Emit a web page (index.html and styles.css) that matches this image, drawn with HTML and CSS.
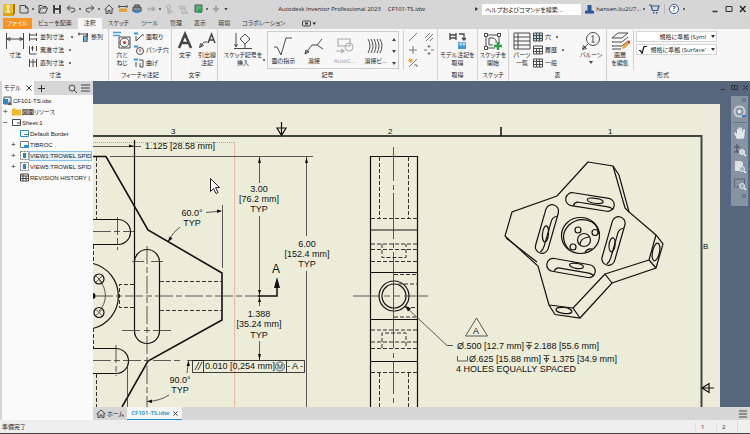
FILE: index.html
```html
<!DOCTYPE html>
<html lang="ja">
<head>
  <meta charset="UTF-8">
  <title>Autodesk Inventor Professional 2023</title>
  <link rel="stylesheet" href="styles.css">
</head>
<body>
<div class="app">

  <!-- Title bar -->
  <header class="titlebar">
    <div class="quick">
      <button class="logo" aria-label="Inventor"><svg width="12" height="13" viewBox="0 0 12 13"><path d="M0 1h12v9l-2 3H0z" fill="#dba512"/><path d="M0 1h10v9H0z" fill="#f0bf25"/><path d="M10 1l2 0v9l-2 3z" fill="#a87400"/><path d="M3.500 3h3M5 3v6M3.500 9h3" stroke="#fff" stroke-width="1.300"/></svg></button>
      <button aria-label="新規"><svg width="10" height="10" viewBox="0 0 10 10"><path d="M1 1.500h5.500l2.500 2.500v5H1zM6.500 1.500V4H9" class="ln"/></svg></button><i class="dot"></i>
      <button aria-label="開く"><svg width="10" height="10" viewBox="0 0 10 10"><path d="M1 9V1.500h3l1 1h3V4M1 9l2-5h6.500l-2 5z" class="ln"/></svg></button>
      <button aria-label="保存"><svg width="10" height="10" viewBox="0 0 10 10"><path d="M1 1h8v8.500H1z" fill="#444"/><path d="M3 1h4v3H3zM3 6h4v3.500H3z" fill="#ddd"/></svg></button>
      <button aria-label="元に戻す"><svg width="10" height="10" viewBox="0 0 10 10"><path d="M4 1.500L1 4l3 2.500M1 4h5q3 0 3 2t-3 2H5" class="ln"/></svg></button><i class="dot"></i>
      <button aria-label="やり直し"><svg width="10" height="10" viewBox="0 0 10 10"><path d="M6 1.500L9 4 6 6.500M9 4H4Q1 4 1 6t3 2h1" class="ln"/></svg></button><i class="dot"></i>
      <button aria-label="ホーム"><svg width="10" height="10" viewBox="0 0 10 10"><path d="M.5 5.500L5 1l4.500 4.500M2 4.500v5h2V6.500h2v3h2v-5" class="ln"/></svg></button>
      <button aria-label="計測"><svg width="10" height="10" viewBox="0 0 10 10"><path d="M1 1v3M9 1v3M1 2.500h8" class="ln"/><path d="M1 4.500h8V8H1z" fill="#e5a23a"/></svg></button>
      <button aria-label="印刷"><svg width="10" height="10" viewBox="0 0 11 10"><path d="M3 3V.5h5V3M1 3h9v4.500H1z" fill="#8a9097" stroke="#444"/><path d="M3 6h5v3.500H3z" fill="#2d8bd0"/></svg></button>
      <button aria-label="更新"><svg width="10" height="10" viewBox="0 0 10 10"><path d="M1 5h4M3 3v4" stroke="#aaa"/><circle cx="7" cy="5" r="2" fill="#aaa"/></svg></button><i class="dot"></i>
      <button aria-label="選択"><svg width="10" height="10" viewBox="0 0 10 10"><path d="M1 3l3-2 2 2-3 2zM5 5l3 4M4 6l1 3M3 5v4h3" stroke="#aaa" fill="none"/></svg></button>
      <button aria-label="設定"><svg width="10" height="10" viewBox="0 0 10 10"><path d="M1 2h3v3H1zM5 4l3 5M3 6v3h6M6 2v3" stroke="#aaa" fill="none"/></svg></button>
      <button aria-label="シート"><svg width="10" height="10" viewBox="0 0 10 10"><path d="M2 1h7v7H2z" fill="#58b37a" stroke="#555"/><path d="M5 5h4v4H5z" fill="#28a559"/></svg></button><i class="dot"></i>
      <button aria-label="追加"><svg width="8" height="8" viewBox="0 0 10 10"><path d="M1 5h8M5 1v8" stroke="#999" stroke-width="2"/></svg></button>
      <button class="caret" aria-label="カスタマイズ"></button>
    </div>
    <div class="title"><span>Autodesk Inventor Professional 2023</span><span>CF101-TS.idw</span></div>
    <div class="account">
      <i class="play"></i>
      <input class="search" type="text" aria-label="ヘルプ検索" value="ヘルプおよびコマンドを検索...">
      <button class="user"><svg width="9" height="10" viewBox="0 0 9 10"><path d="M2.500 1h4v5h-4zM0 9.500V7q4.500-2 9 0v2.500z" fill="#25599b"/></svg><span>hansen.liu2U7...</span><i class="dot"></i></button>
      <button aria-label="カート"><svg width="11" height="10" viewBox="0 0 11 10"><path d="M0 1h2l1.500 5.500h5L10 2H3" fill="none" stroke="#31588a" stroke-width="1.200"/><path d="M4 8h1.500v1.500H4zM7 8h1.500v1.500H7z" fill="#31588a"/></svg></button>
      <i class="bar"></i>
      <button class="help" aria-label="ヘルプ">?</button><i class="dot"></i>
    </div>
    <div class="winbtns">
      <button aria-label="最小化"><svg width="8" height="8"><path d="M1.500 6.500h5" stroke="#333" stroke-width="1.500"/></svg></button>
      <button aria-label="最大化"><svg width="8" height="8"><path d="M1 1.500h6v5H1z" fill="none" stroke="#333"/></svg></button>
      <button aria-label="閉じる"><svg width="8" height="8"><path d="M1 1l5.500 6M6.500 1L1 7" stroke="#222" stroke-width="1.300"/></svg></button>
    </div>
  </header>

  <!-- Ribbon tabs -->
  <nav class="tabs">
    <a href="#" class="file">ファイル</a>
    <a href="#">ビューを配置</a>
    <a href="#" class="current">注釈</a>
    <a href="#">スケッチ</a>
    <a href="#">ツール</a>
    <a href="#">管理</a>
    <a href="#">表示</a>
    <a href="#">環境</a>
    <a href="#">コラボレーション</a>
    <button aria-label="表示切替"><svg width="14" height="7" viewBox="0 0 14 7"><rect x=".5" y="1" width="8" height="5" rx="1" fill="none" stroke="#444"/><path d="M3 2.500h3v2H3z" fill="#444"/><path d="M10.500 2.500h3.500L12.250 5z" fill="#222"/></svg></button>
  </nav>

  <!-- Ribbon -->
  <div class="ribbon">
    <section class="panel w-dim">
      <div class="body">
        <button class="big"><svg width="20" height="20" viewBox="0 0 20 20"><path d="M1.500 2v16M18.500 2v16M2 8h16M2 8l3-1.500v3zM18 8l-3-1.500v3z" class="ln"/></svg>寸法</button>
        <div class="rows">
          <button><svg width="10" height="10" viewBox="0 0 10 10"><path d="M1.500 1v8M1.500 3h7M1.500 7h7M8.500 1v3M8.500 6v3" class="ln"/></svg>並列寸法<i class="dot far"></i></button>
          <button><svg width="10" height="10" viewBox="0 0 10 10"><path d="M1.500 1v8h7M4.500 1v5M8.500 1v5M3 3h3" class="ln"/></svg>累進寸法<i class="dot"></i></button>
          <button><svg width="10" height="10" viewBox="0 0 10 10"><path d="M1.500 1v8M5 1v8M8.500 1v8M1 4h8" class="ln"/></svg>直列寸法<i class="dot"></i></button>
        </div>
        <div class="rows">
          <button><svg width="11" height="10" viewBox="0 0 11 10"><path d="M0 2h5M1 .5v3M5 2h4v6M9.500 1v4" class="ln"/><path d="M5.500 4h3.500v6H5.500z" fill="#6fb8e6" stroke="#555"/></svg>整列</button>
        </div>
      </div>
      <h2>寸法</h2>
    </section>

    <section class="panel w-feat">
      <div class="body">
        <button class="big"><svg width="20" height="20" viewBox="0 0 20 20"><path d="M1 1.500h8M1 4.500h7" stroke="#46a2db" stroke-width="1.500"/><path d="M7 6h11v11H7z" class="ln"/><circle cx="12.500" cy="11.500" r="4.500" class="ln"/><circle cx="12.500" cy="11.500" r="1.500" fill="#d22"/></svg>穴と<br>ねじ</button>
        <div class="rows">
          <button><svg width="10" height="10" viewBox="0 0 10 10"><path d="M0 1.500h4" stroke="#3297d4" stroke-width="2"/><path d="M2 9l6-6h2M2 4v5" class="ln"/></svg>面取り</button>
          <button><svg width="10" height="10" viewBox="0 0 10 10"><path d="M0 1.500h4" stroke="#3297d4" stroke-width="2"/><circle cx="6" cy="6" r="3.500" class="ln"/><path d="M6 4v3" stroke="#d22"/></svg>パンチ穴</button>
          <button><svg width="10" height="10" viewBox="0 0 10 10"><path d="M0 1.500h4" stroke="#3297d4" stroke-width="2"/><path d="M2 4v5M5 2h4v7H6V5" class="ln"/></svg>曲げ</button>
        </div>
      </div>
      <h2>フィーチャ注記</h2>
    </section>

    <section class="panel w-text">
      <div class="body">
        <button class="big"><svg width="18" height="20" viewBox="0 0 18 20"><path d="M3 17L9 3l6 14M5.500 12h7" fill="none" stroke="#444" stroke-width="2.500"/></svg>文字</button>
        <button class="big"><svg width="18" height="20" viewBox="0 0 18 20"><path d="M10 12l3.500-9 3.500 9M11 9h5" fill="none" stroke="#444" stroke-width="1.500"/><path d="M9 11H6l-4 5M1.500 16.500l1-4 3 2z" class="ln"/></svg>引出線<br>注記</button>
      </div>
      <h2>文字</h2>
    </section>

    <section class="panel w-sym">
      <div class="body">
        <button class="big wide"><svg width="20" height="20" viewBox="0 0 20 20"><path d="M3 2v14M1.500 13L3 16l1.500-3M1 17.500h18M12 3l5 5-5 5-5-5zM12 13v4" class="ln"/></svg>スケッチ記号を<br>挿入</button>
        <i class="dot low"></i>
        <div class="gallery">
          <button><svg width="20" height="20" viewBox="0 0 20 20"><path d="M1 11l3 0 4 8L13 2h6" class="ln"/></svg>面の指示</button>
          <button><svg width="20" height="20" viewBox="0 0 20 20"><path d="M1 18l7-9h5l5-6M13 9l6 4M1 18l1-4 3 2z" class="ln"/></svg>溶接</button>
          <button class="off"><svg width="20" height="20" viewBox="0 0 20 20"><path d="M3 3h12v7H3zM1 15h7M6 13l3 2-3 2" fill="none" stroke="#aaa" stroke-width="1.200"/><circle cx="14" cy="11" r="4" fill="none" stroke="#aaa"/></svg>AutoC...</button>
          <button><svg width="20" height="20" viewBox="0 0 20 20"><path d="M2 3q4 7 0 14M5 3q4 7 0 14M8 3q4 7 0 14M11 3q4 7 0 14M14 3q4 7 0 14" class="ln"/></svg>溶接ビ...</button>
          <div class="scroll"><i class="up"></i><i class="down"></i><i class="down"></i></div>
        </div>
        <i class="sep"></i>
        <div class="grid">
          <button aria-label="中心線"><svg width="10" height="10" viewBox="0 0 10 10"><path d="M1 9l8-8" stroke="#777"/></svg></button>
          <button aria-label="二等分線"><svg width="10" height="10" viewBox="0 0 10 10"><path d="M1 6l5-5M2 9l7-7M6 9l3-3" stroke="#777"/></svg></button>
          <button aria-label="中心マーク"><svg width="10" height="10" viewBox="0 0 10 10"><path d="M5 1v8M1 5h8" stroke="#777"/></svg></button>
          <button aria-label="中心パターン"><svg width="10" height="10" viewBox="0 0 10 10"><path d="M5 0v3M5 7v3M0 5h3M7 5h3M3.500 1.500h3M3.500 8.500h3" stroke="#777"/></svg></button>
          <button aria-label="自動中心線"><svg width="10" height="10" viewBox="0 0 10 10"><path d="M1 9l8-8M6 7h3v2" stroke="#777" fill="none"/><circle cx="2.500" cy="2.500" r="2" fill="#f2a52a"/></svg></button>
        </div>
      </div>
      <h2>記号</h2>
    </section>

    <section class="panel w-get">
      <div class="body center">
        <button class="big wide"><svg width="20" height="20" viewBox="0 0 20 20"><path d="M2 2v7M8 2v7M2 4h6M2 7h6M11 3h5v6M14 7l2 2 2-2" fill="none" stroke="#444" stroke-width="1.300"/><path d="M10 11h8v7h-8z" fill="#3d9edb"/><path d="M10 13h8M13 11v4M16 11v4" stroke="#fff" stroke-width=".7"/></svg>モデル注記を<br>取得</button>
      </div>
      <h2>取得</h2>
    </section>

    <section class="panel w-sk">
      <div class="body center">
        <button class="big wide"><svg width="20" height="20" viewBox="0 0 20 20"><path d="M3 4h13M3 4v13h9M16 4v9M6 7v7h4M6 7h4q4 1 3 5" class="ln"/><path d="M1.500 2.500h3v3h-3zM14.500 2.500h3v3h-3zM1.500 15.500h3v3h-3z" fill="#fff" stroke="#444"/><path d="M15 11v8M11 15h8" stroke="#27a243" stroke-width="2.500"/></svg>スケッチを<br>開始</button>
      </div>
      <h2>スケッチ</h2>
    </section>

    <section class="panel w-tab">
      <div class="body">
        <button class="big"><svg width="20" height="20" viewBox="0 0 20 20"><path d="M2 2h16v16H2zM2 6h16M2 10h16M2 14h16M6 2v16" class="ln"/></svg>パーツ<br>一覧</button>
        <div class="rows">
          <button><svg width="10" height="10" viewBox="0 0 10 10"><path d="M1 1h8v8H1z" fill="#b4d8ee"/><path d="M.5 1h9v8h-9zM.5 3.500h9M.5 6.500h9M3.500 1v8M6.500 1v8" class="ln"/></svg>穴<i class="dot"></i></button>
          <button><svg width="10" height="10" viewBox="0 0 10 10"><path d="M.5 1h9v8h-9zM.5 3.500h9M.5 6.500h9M3.500 3v6M6.500 3v6" class="ln"/></svg>履歴<i class="dot"></i></button>
          <button><svg width="10" height="10" viewBox="0 0 10 10"><path d="M.5 1h9v8h-9zM.5 3.500h9M.5 6.500h9M3.500 1v8M6.500 1v8" class="ln"/></svg>一般</button>
        </div>
        <i class="sep"></i>
        <button class="big wide balloon"><svg width="20" height="20" viewBox="0 0 20 20"><circle cx="12" cy="8" r="6.500" class="ln"/><path d="M7 13l-5 5M1.500 18.500l1-4 3 3zM10.500 6L12 4.500V11M10.500 11h3" class="ln"/></svg>バルーン<i class="down"></i></button>
      </div>
      <h2>表</h2>
    </section>

    <section class="panel w-fmt">
      <div class="body">
        <button class="big"><svg width="20" height="20" viewBox="0 0 20 20"><path d="M2 7l6-5h10l-6 5zM2 11l1-1M2 11h10l6-5M2 15l1-1M2 15h10l6-5M2 18h9" class="ln"/><path d="M12 18l1-3 5-5 2 2-5 5z" fill="#f1a032"/><path d="M18 10l2 2" stroke="#c33" stroke-width="2"/></svg>画層<br>を編集</button>
        <i class="sep"></i>
        <div class="styles">
          <label class="pick"><i class="tick"></i><select aria-label="スタイル"><option>規格に準拠 (Syml</option></select></label>
          <label class="pick"><i class="tick"><svg width="8" height="8" viewBox="0 0 8 8"><path d="M0 4.500h1.500L3 7.500 5 .5h3" fill="none" stroke="#111" stroke-width="1.200"/></svg></i><select aria-label="画層"><option>規格に準拠 (Surface'</option></select></label>
        </div>
      </div>
      <h2>形式</h2>
    </section>
  </div>

  <div class="main">
    <!-- Model browser -->
    <aside class="browser">
      <div class="btabs">
        <button class="on">モデル <svg width="6" height="6"><path d="M.5.5l5 5M5.500.5l-5 5" stroke="#333"/></svg></button>
        <button aria-label="追加"><svg width="7" height="7"><path d="M3.500 0v7M0 3.500h7" stroke="#333"/></svg></button>
        <button class="find" aria-label="検索"><svg width="9" height="9"><circle cx="4" cy="4" r="3" class="ln"/><path d="M6 6l3 3" class="ln"/></svg></button>
        <button aria-label="メニュー"><svg width="9" height="8"><path d="M0 1h9M0 4h9M0 7h9" stroke="#444"/></svg></button>
      </div>
      <ul class="tree">
        <li><svg width="9" height="9" viewBox="0 0 9 9"><path d="M1 1h7v7H1z" fill="#dbe9f3" stroke="#555"/><path d="M0 3h5v5H0z" fill="#2f87c5"/><path d="M6 5l3 4H5z" fill="#555"/></svg>CF101-TS.idw</li>
        <li class="l1"><b>+</b><svg width="9" height="9" viewBox="0 0 9 9"><path d="M0 1.500h3l1 1h5V8.500H0z" fill="#f0b82e"/></svg><span><mark>図面</mark>リソース</span></li>
        <li class="l1"><b>−</b><svg width="9" height="9" viewBox="0 0 9 9"><path d="M.5 1.500h8v6h-8zM5 5h3.500" class="ln"/></svg>Sheet:1</li>
        <li class="l2"><b></b><svg width="9" height="9" viewBox="0 0 9 9"><path d="M.5 1.500h8v6h-8zM4 5.500h4" fill="#fff" stroke="#2d8cc4"/></svg>Default Border</li>
        <li class="l2"><b>+</b><svg width="9" height="9" viewBox="0 0 9 9"><path d="M.5 1.500h8v6h-8z" fill="#fff" stroke="#777"/><path d="M4 5h5v3H4z" fill="#2795d9"/></svg>TIBROC</li>
        <li class="l2"><b>+</b><svg width="9" height="9" viewBox="0 0 9 9"><path d="M.5.5h8v8h-8z" fill="none" stroke="#777" stroke-dasharray="2 1"/><path d="M3 2h3v5H3z" fill="#2986ca"/></svg><span class="sel">VIEW1:TROWEL SPID</span></li>
        <li class="l2"><b>+</b><svg width="9" height="9" viewBox="0 0 9 9"><path d="M.5.5h8v8h-8z" fill="none" stroke="#777" stroke-dasharray="2 1"/><path d="M3 2h3v5H3z" fill="#2986ca"/></svg>VIEW5:TROWEL SPID</li>
        <li class="l2"><b></b><svg width="9" height="9" viewBox="0 0 9 9"><path d="M.5 1h8v7h-8zM.5 3h8M.5 5.500h8M3 1v7M6 3v5" class="ln"/></svg>REVISION HISTORY (</li>
      </ul>
    </aside>

    <div class="work">
      <div class="canvas">
        <svg class="drawing" viewBox="93 81 657 326" preserveAspectRatio="xMinYMin slice">
          <!-- sheet and border -->
          <rect x="93" y="104" width="627" height="303" class="sheet"/>
          <path d="M93 136H701.500V407" fill="none" stroke="#424840" stroke-width="2"/>
          <path d="M501 127v9" stroke="#111" stroke-width="1.500"/>
          <path d="M281.500 122v14M277 128h9l-4.500 7.500zM714 388h-12M709 383.500v9l-7-4.500z" class="k" />
          <g class="zone"><text x="171" y="134">3</text><text x="388" y="134">2</text><text x="608" y="134">1</text><text x="703" y="249">B</text></g>
          <path d="M93 142.500H234" class="red dots"/>
          <path d="M234.500 142V407" class="red"/>

          <!-- front view -->
          <path d="M93 156.500h13L148 230l74 43v47l-74 41-26 46" class="thick"/>
          <path d="M134.500 140v122M134.500 262a12.500 12.500 0 0 1 25 0v69a12.500 12.500 0 0 1-25 0v-69" class="k"/>
          <path d="M93 219.500h25a12.500 12.500 0 0 1 0 25H93M93 348.500h23a12.500 12.500 0 0 1 0 25H93" class="k"/>
          <path d="M93 263.500A33.500 33.500 0 0 1 93 328.500" class="k"/>
          <path d="M99 280A22 22 0 0 1 99 311" class="t"/>
          <circle cx="99" cy="279" r="5" class="k"/><circle cx="99" cy="312.500" r="5" class="k"/>
          <path d="M96 276l6 6M102 276l-6 6M96 309.500l6 6M102 309.500l-6 6" class="t"/>
          <circle cx="92.500" cy="296" r="3" fill="#111"/>
          <path d="M96.500 157v62M93.500 245v18M93.500 328v20M96.500 374v33M134 284.500h-14.500v23H134M160 281.500h62M160 310.500h62" class="d"/>
          <path d="M95 296h164M147 246v161M93 231.500h41M117.500 217v33M93 360.500h87M116 345v31" class="c"/>
          <path d="M132 261.500h12M151 261.500h12M122 330.500h18M144 330.500h6M153 330.500h18M127.500 364v43" class="t"/>
          <path d="M110 156.500h203M222.500 205v63M259.500 157v26M259.500 216v90M259.500 341v19M306.500 157v79M306.500 271v136M93 146.500h48" class="t"/>
          <path d="M134 146l-5-1.500v3zM259.500 157l-1.500 6h3zM306.500 157l-1.500 6h3zM259.500 295l-1.500-5h3zM259.500 297l-1.500 5h3zM259.500 360l-1.500-6h3z" class="f"/>
          <path d="M206 212.500l15-1.500M180 227q-6 4-12 14M187 373l1.500-12M169 395q-9 6-22 6.500M187 360.500h17" class="t"/>
          <path d="M222 211l-5-1.500v3.500zM168 242l1.500-5.500 3 2zM188.500 361l-2 5h3.500zM147 401.500l5-2v3.500z" class="f"/>
          <path d="M258 296h19v-9" fill="none" stroke="#111" stroke-width="1.500"/><path d="M277 277l-3 11h6z" class="f"/>
          <g class="dimtext">
            <text x="145" y="149" class="left">1.125 [28.58 mm]</text>
            <text x="259" y="192">3.00</text><text x="259" y="202">[76.2 mm]</text><text x="259" y="212">TYP</text>
            <text x="307" y="247">6.00</text><text x="307" y="257">[152.4 mm]</text><text x="307" y="267">TYP</text>
            <text x="192" y="216">60.0°</text><text x="192" y="226">TYP</text>
            <text x="259" y="317">1.388</text><text x="259" y="327">[35.24 mm]</text><text x="259" y="338">TYP</text>
            <text x="180" y="383">90.0°</text><text x="180" y="393">TYP</text>
            <text x="276" y="273" class="mark">A</text>
            <text x="205" y="369" class="left">0.010 [0,254 mm]</text>
            <text x="295" y="369">- A -</text>
            <text x="280" y="369" class="tiny">M</text>
          </g>
          <path d="M192.500 360.500h112v12h-112zM203.500 360v12M286.500 360v12M195 370l4-8M198 370l4-8" class="box"/>
          <circle cx="280" cy="366.500" r="4.500" class="t"/>
          <path d="M210.500 178.500v13l3-3 2.500 5 2-1-2.500-5h4z" fill="#fff" stroke="#222"/>

          <!-- side view -->
          <path d="M370.500 407V156.500h47V407M370.500 230h47M370.500 272.500h47M370.500 319.500h47M370.500 361.500h47" class="k"/>
          <circle cx="394" cy="296" r="15" class="k"/><circle cx="394" cy="296" r="12" class="k"/>
          <path d="M379.500 157v61M408.500 157v61M371 218.500h47M371 244h47M371 249.500h47M382 244v13.500h24V244M371 261.500h47M394 274.500h24M398 284h20M405 307.500h13M394 317h24M371 330h47M382 348v-15h24v15M371 342h47M371 348.500h47M371 372.500h47M379.500 373v34M408.500 373v34" class="d"/>
          <path d="M393.500 147v34M393.500 185v5M393.500 193v46M393.500 243v5M393.500 252v96M393.500 353v5M393.500 362v32M393.500 398v5M353 296h27M384 296h6M394 296h6M404 296h24" class="t"/>
          <path d="M406 307l41 38.500h6M476.500 318l-11 18h22z" class="t"/><path d="M405 305.500l6 3-3 3z" class="f"/>
          <g class="dimtext">
            <text x="476" y="334">A</text>
            <text x="457" y="349" class="left">Ø.500 [12.7 mm]</text><text x="534" y="349" class="left">2.188 [55.6 mm]</text>
            <text x="469" y="362" class="left">Ø.625 [15.88 mm]</text><text x="552" y="362" class="left">1.375 [34.9 mm]</text>
            <text x="456" y="372" class="left">4 HOLES EQUALLY SPACED</text>
          </g>
          <path d="M457.500 356v5h10v-5M526 342.500h6M529 342.500v7M526.500 345.500h5l-2.500 3.500zM543.500 355.500h6M546.500 355.500v7M544 358.500h5l-2.500 3.500z" class="t"/>

          <!-- isometric view -->
          <path d="M588 162l25 4 6 9 10 37 27 23 7 9-7 24-44 15-32 35-25-3.500-6-9.500-11-39-33-30 7-24 45-16z" class="k"/>
          <path d="M613 166l12 42 4 4M506 238l31 24M656 235l-7 25 7 8M649 260l-44 14 7 9M605 274l-32 34 7 10M573 308l-24-3" class="k"/>
          <g class="k">
            <ellipse cx="564" cy="310.500" rx="8" ry="3" transform="rotate(8 564 310)"/>
            <ellipse cx="656" cy="252" rx="3.500" ry="9" transform="rotate(12 656 252)"/>
            <g transform="translate(590 202) rotate(9)"><rect x="-24.500" y="-6.500" width="49" height="13" rx="6.500"/><path d="M-16 6q1-4 5-4h28q5 0 7 2"/><ellipse cx="5" cy="-2" rx="8" ry="2.500"/></g>
            <g transform="translate(571 268) rotate(10)"><rect x="-24.500" y="-6.500" width="49" height="13" rx="6.500"/><path d="M-16 6q1-4 5-4h28q5 0 7 2"/><ellipse cx="5" cy="-3" rx="7" ry="2.500"/></g>
            <g transform="translate(547 229) rotate(16)"><rect x="-6.500" y="-25" width="13" height="50" rx="6.500"/><path d="M6-15q-4 2-4 6v26q0 4-2 7"/><ellipse cx="-1" cy="5" rx="3" ry="8" transform="rotate(-10)"/></g>
            <g transform="translate(613.500 241) rotate(16)"><rect x="-6.500" y="-25" width="13" height="50" rx="6.500"/><path d="M6-15q-4 2-4 6v26q0 4-2 7"/><ellipse cx="-1" cy="4" rx="3" ry="7" transform="rotate(-10)"/></g>
            <ellipse cx="580.500" cy="235.500" rx="19" ry="18"/>
            <path d="M569 250q-11-14 0-25 10-9 23-3 6 4 7 12"/>
            <circle cx="584" cy="240" r="6.500"/><path d="M580 245q0-7 9-8M585 252q3-4 7-3"/>
            <circle cx="578" cy="230" r="3"/><circle cx="595" cy="232.500" r="3"/><circle cx="573" cy="247" r="3"/>
          </g>
        </svg>

        <div class="mdi">
          <button aria-label="最小化"><svg width="7" height="7"><path d="M1 5.500h4" stroke="#333"/></svg></button>
          <button aria-label="元のサイズ"><svg width="7" height="7"><path d="M.5 1.500h6v4h-6zM3.500 1v5" fill="none" stroke="#333"/></svg></button>
          <button aria-label="閉じる"><svg width="7" height="7"><path d="M1 1l5 5M6 1L1 6" stroke="#333"/></svg></button>
        </div>
        <div class="navbar">
          <i class="knob"></i>
          <button aria-label="ホイール"><svg width="14" height="14" viewBox="0 0 14 14"><circle cx="6.500" cy="6.500" r="5" fill="none" stroke="#cdd3d9" stroke-width="2"/><circle cx="6.500" cy="6.500" r="2" fill="#dde1e5"/><path d="M9 11h4" stroke="#3d7fc0" stroke-width="2"/></svg></button>
          <hr>
          <button aria-label="画面移動"><svg width="14" height="14" viewBox="0 0 14 14"><path d="M4 13L1 7l1-1 2 2V3l1.500 0v3V1.500H7V6l.5-4.500H9V6.500L10.500 3l1.500.5-1 9z" fill="#e4e7ea"/></svg></button>
          <button aria-label="ズーム"><svg width="14" height="14" viewBox="0 0 14 14"><path d="M4 1v8M1 4h6M1 9h5" stroke="#444d58"/><circle cx="9" cy="9" r="2.500" fill="#ccd4da" stroke="#e4e7ea"/><path d="M11 11l2 2" stroke="#eee" stroke-width="1.500"/></svg></button>
          <button aria-label="全体表示"><svg width="14" height="14" viewBox="0 0 14 14"><path d="M2 1h6l2 2v8H2z" fill="#dfe3e6"/><circle cx="9" cy="9" r="2.500" fill="#9cacba" stroke="#e4e7ea"/><path d="M11 11l2 2" stroke="#eee" stroke-width="1.500"/></svg></button>
          <button aria-label="窓ズーム"><svg width="14" height="14" viewBox="0 0 14 14"><path d="M1.500 2h10v8h-10z" fill="none" stroke="#5c6672"/><circle cx="9" cy="9" r="2.500" fill="#9cacba" stroke="#e4e7ea"/><path d="M11 11l2 2" stroke="#eee" stroke-width="1.500"/></svg></button>
          <i class="knob"></i>
        </div>
      </div>

      <div class="doctabs">
        <button><svg width="10" height="9" viewBox="0 0 10 9"><path d="M.5 5L5 1l4.500 4M2 4v4.500h2V6h2v2.500h2V4" class="ln"/></svg>ホーム</button>
        <button class="on">CF101-TS.idw <svg width="5" height="5"><path d="M.5.5l4 4M4.500.5l-4 4" stroke="#333"/></svg></button>
        <button class="menu" aria-label="ドキュメント一覧"><svg width="8" height="8"><path d="M0 1h8M0 4h8M0 7h8" stroke="#444"/></svg></button>
      </div>
    </div>
  </div>

  <footer class="status"><span class="msg">準備完了</span><span class="cell">1</span><span class="cell">2</span><span class="grip"></span></footer>
</div>
</body>
</html>
```

FILE: styles.css
```css
* {
  box-sizing: border-box;
}

body {
  margin: 0;
  font-family: "Open Sans", "Noto Sans CJK JP", sans-serif;
  font-size: 6px;
  line-height: 8px;
  font-feature-settings: "palt";
  color: #222;
  background: #d6d6d6;
}

button, input, select {
  font: inherit;
  font-feature-settings: inherit;
  color: inherit;
  border: 0;
  padding: 0;
  margin: 0;
  background: none;
}

svg {
  display: block;
  flex: none;
}

.ln {
  fill: none;
  stroke: #4a4a4a;
}

.app {
  display: flex;
  flex-direction: column;
  height: 100vh;
  border-bottom: 1px solid #444;
}

/* title bar */
.titlebar {
  display: flex;
  align-items: center;
  height: 18px;
  padding: 0 3px;
}

.quick, .account, .winbtns {
  display: flex;
  align-items: center;
}

.quick {
  gap: 4px;
}

.quick .dot {
  margin-left: -1px;
}

.dot {
  display: block;
  width: 2px;
  height: 2px;
  background: #444;
  border-radius: 1px;
}

.caret, .down, .up {
  display: block;
  width: 4px;
  height: 3px;
  background: #444;
  clip-path: polygon(0 0, 100% 0, 50% 100%);
}

.up {
  clip-path: polygon(50% 0, 100% 100%, 0 100%);
}

.title {
  flex: 1;
  display: flex;
  justify-content: center;
  gap: 7px;
  white-space: nowrap;
}

.account {
  gap: 4px;
}

.play {
  width: 3px;
  height: 4px;
  background: #333;
  clip-path: polygon(0 0, 100% 50%, 0 100%);
}

.search {
  width: 99px;
  height: 11px;
  padding: 0 3px;
  background: #fff;
}

.user {
  display: flex;
  align-items: center;
  gap: 2px;
}

.bar {
  width: 1px;
  height: 10px;
  background: #bbb;
}

.help {
  width: 10px;
  height: 10px;
  border: 1px solid #31588a;
  border-radius: 50%;
  font-size: 7px;
  font-weight: bold;
  line-height: 8px;
  color: #31588a;
  background: #fff;
}

.winbtns {
  gap: 6px;
  margin-left: 26px;
}

/* ribbon tabs */
.tabs {
  display: flex;
  align-items: center;
  height: 11px;
  padding-left: 3px;
}

.tabs a {
  padding: 0 6px;
  line-height: 11px;
  color: #333;
  text-decoration: none;
  white-space: nowrap;
}

.tabs .file {
  padding: 0 4px;
  color: #fff;
  background: #f7941d;
}

.tabs .current {
  background: #f7f7f7;
}

.tabs button {
  margin-left: 11px;
}

/* ribbon */
.ribbon {
  display: flex;
  height: 52px;
  padding-left: 2px;
  background: #f7f7f7;
}

.panel {
  display: flex;
  flex-direction: column;
  flex: none;
  border-right: 1px solid #d2d2d2;
}

.w-dim { width: 107px; }
.w-feat { width: 63px; }
.w-text { width: 46px; }
.w-sym { width: 220px; }
.w-get { width: 40px; }
.w-sk { width: 31px; }
.w-tab { width: 98px; }
.w-fmt {
  width: 112px;
  border-right: 0;
}

.body {
  display: flex;
  flex: 1;
  padding: 1px 2px 0;
}

.center {
  justify-content: center;
}

.panel h2 {
  margin: 0;
  font-size: 6px;
  font-weight: normal;
  line-height: 11px;
  text-align: center;
}

.big {
  display: flex;
  flex-direction: column;
  align-items: center;
  flex: none;
  width: 22px;
  padding-top: 1px;
  white-space: nowrap;
}

.wide {
  width: 38px;
}

.w-dim .rows {
  margin-left: 2px;
}

.w-feat .rows {
  margin-left: 1px;
}

.rows {
  display: flex;
  flex-direction: column;
}

.rows button {
  display: flex;
  align-items: center;
  gap: 2px;
  height: 13px;
  white-space: nowrap;
}

.rows .dot {
  margin-left: 3px;
}

.rows .far {
  margin-left: 5px;
  margin-right: 3px;
}

.w-sym .body {
  padding-left: 6px;
}

.low {
  align-self: flex-end;
  margin: 0 2px 9px 1px;
}

.gallery {
  display: flex;
  width: 132px;
  height: 38px;
  margin-top: 1px;
  border: 1px solid #ccc;
}

.gallery button {
  display: flex;
  flex-direction: column;
  align-items: center;
  flex: 1;
  gap: 1px;
  padding-top: 4px;
  white-space: nowrap;
}

.gallery .off {
  color: #999;
}

.scroll {
  display: flex;
  flex-direction: column;
  justify-content: space-between;
  padding: 6px 2px 3px 1px;
}

.sep {
  width: 1px;
  height: 40px;
  margin: 0 4px;
  background: #d2d2d2;
}

.grid {
  display: grid;
  grid-template-columns: 10px 10px;
  grid-auto-rows: 13px;
  column-gap: 6px;
  align-items: center;
}

.balloon .down {
  margin-top: 2px;
}

.w-fmt .sep {
  margin: 0 2px;
}

.styles {
  display: flex;
  flex-direction: column;
  flex: 1;
  gap: 2px;
  padding-top: 1px;
}

.pick {
  display: flex;
  align-items: center;
  height: 11px;
  border: 1px solid #d5d5d5;
  background: #fff;
}

.pick::after {
  content: "";
  width: 4px;
  height: 3px;
  margin-right: 1px;
  background: #333;
  clip-path: polygon(0 0, 100% 0, 50% 100%);
}

.tick {
  width: 10px;
  padding-left: 2px;
}

.pick select {
  flex: 1;
  width: 20px;
  appearance: none;
  text-align: right;
  padding-right: 5px;
}

/* model browser */
.main {
  display: flex;
  flex: 1;
  min-height: 0;
}

.browser {
  flex: none;
  width: 93px;
  overflow: hidden;
  border-left: 2px solid #d6d6d6;
  background: #fafafa;
}

.btabs {
  display: flex;
  align-items: center;
  gap: 4px;
  height: 14px;
  padding-right: 3px;
  background: #d6d6d6;
}

.btabs .on {
  display: flex;
  align-items: center;
  gap: 5px;
  width: 32px;
  height: 14px;
  padding-left: 2px;
  background: #fafafa;
}

.find {
  margin-left: auto;
}

.tree {
  margin: 0;
  padding: 0 0 0 1px;
  list-style: none;
  font-family: "Liberation Sans", "Noto Sans CJK JP", sans-serif;
}

.tree li {
  display: flex;
  align-items: center;
  gap: 1px;
  height: 11px;
  white-space: nowrap;
}

.tree b {
  flex: none;
  width: 8px;
  font-size: 8px;
  font-weight: normal;
}

.tree mark {
  color: inherit;
  background: #ccc;
}

.tree .l2 {
  padding-left: 8px;
}

.sel {
  outline: 1px solid #7fc1ea;
  background: #e3f2fb;
}

/* drawing area */
.work {
  display: flex;
  flex-direction: column;
  flex: 1;
  min-width: 0;
}

.canvas {
  position: relative;
  flex: 1;
  min-height: 0;
  background: #56677d;
}

.drawing {
  width: 100%;
  height: 100%;
}

.sheet { fill: #ecedd8; }

.k, .thick, .box {
  fill: none;
  stroke: #111;
  stroke-width: 1.2;
}

.thick { stroke-width: 1.6; }
.box { stroke-width: 0.8; }
.f { fill: #111; }

.t, .c, .d {
  fill: none;
  stroke: #333;
  stroke-width: 0.8;
}

.c { stroke-dasharray: 18 3 6 3; }

.d {
  stroke-width: 1;
  stroke-dasharray: 4 2;
}

.red {
  fill: none;
  stroke: #f7b5a6;
}

.dots {
  stroke: #f08878;
  stroke-dasharray: 1 1;
}

.zone, .dimtext {
  font-family: "Liberation Sans", sans-serif;
  font-size: 9px;
  fill: #111;
}

.zone { font-size: 8px; }
.dimtext { text-anchor: middle; }
.left { text-anchor: start; }
.mark { font-size: 12px; }
.tiny { font-size: 7px; }

.mdi {
  position: absolute;
  top: 3px;
  right: 1px;
  display: flex;
  gap: 4px;
}

.navbar {
  position: absolute;
  top: 15px;
  right: 2px;
  display: flex;
  flex-direction: column;
  align-items: center;
  gap: 3px;
  width: 17px;
  height: 110px;
  padding: 2px 0;
  background: #8593a3;
}

.navbar hr {
  width: 13px;
  margin: 0;
  border: 0;
  border-top: 1px solid #66768a;
}

.knob {
  align-self: flex-end;
  width: 4px;
  height: 4px;
  margin-right: 2px;
  border: 1px solid #56677d;
  border-radius: 50%;
}

.doctabs {
  display: flex;
  height: 13px;
  background: #d6d6d6;
}

.doctabs button {
  display: flex;
  align-items: center;
  gap: 1px;
  padding: 0 3px;
}

.doctabs .on {
  gap: 4px;
  padding: 0 4px;
  color: #1583c4;
  font-weight: 600;
  background: #f5f5f5;
  border-bottom: 1px solid #1b92d8;
}

.doctabs .menu {
  margin-left: auto;
}

.status {
  display: flex;
  align-items: center;
  height: 13px;
  padding-left: 2px;
  background: #efefef;
}

.msg {
  flex: 1;
}

.cell {
  width: 21px;
  padding-left: 5px;
  border-left: 1px solid #ddd;
}

.grip {
  width: 13px;
  height: 13px;
  border-left: 1px solid #ddd;
}
```
